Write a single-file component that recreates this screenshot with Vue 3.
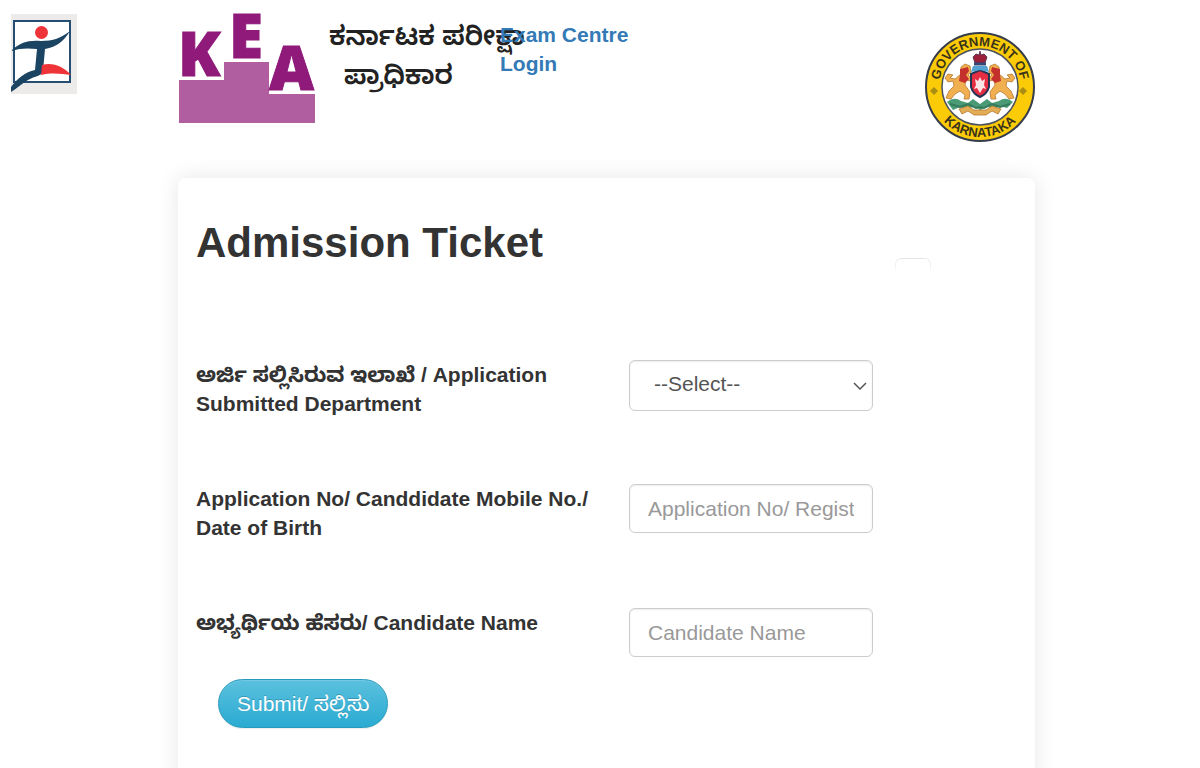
<template>
  <div class="page">
    <!-- Side logo -->
    <svg class="side-logo" viewBox="0 0 66 80" role="img" aria-label="Logo">
      <rect width="66" height="80" fill="#edebea" />
      <rect x="3" y="7" width="56" height="61" fill="#fff" stroke="#264e73" stroke-width="2" />
      <circle cx="30.500" cy="18.500" r="6.500" fill="#ee3439" />
      <path d="M0 37C9 28 18 26 30 27C42 27 50 24 59 17C53 27 46 33 34 35L32 57C31 62 24 62 17 66C10 70 5 75 0 78V73C7 64 14 58 24 56L26 35C17 34 9 34 0 37Z" fill="#1b4463" />
      <path d="M31 51C42 48 53 53 60 61C51 60 42 58 30 61Z" fill="#ee3439" />
    </svg>

    <div class="main">
      <header class="header">
        <div class="brand">
          <svg class="brand-logo" viewBox="0 0 137 112" role="img" aria-label="KEA">
            <path d="M1 67H46V49H91V81H137V110H1Z" fill="#b05e9f" />
            <g class="brand-letters" fill="#8f1a7a" stroke="#8f1a7a">
              <text x="0" y="63">K</text>
              <text x="51" y="45">E</text>
              <text x="91" y="77">A</text>
            </g>
          </svg>
          <div class="brand-name">
            <div>ಕರ್ನಾಟಕ ಪರೀಕ್ಷಾ</div>
            <div class="brand-second">ಪ್ರಾಧಿಕಾರ</div>
          </div>
        </div>
        <a class="centre-link" href="#">Exam Centre Login</a>
        <svg class="emblem" viewBox="0 0 110 112" role="img" aria-label="Government of Karnataka">
          <defs>
            <path id="arcTop" d="M14 56A41 41 0 0 1 96 56" />
            <path id="arcBottom" d="M5 56A50 50 0 0 0 105 56" />
          </defs>
          <circle cx="55" cy="56" r="54" fill="#fccb07" stroke="#353c4c" stroke-width="2" />
          <circle cx="55" cy="56" r="38" fill="#fff" stroke="#4b5060" stroke-width="1.500" />
          <g class="emblem-text">
            <text text-anchor="middle"><textPath href="#arcTop" startOffset="50%">GOVERNMENT OF</textPath></text>
            <text text-anchor="middle"><textPath href="#arcBottom" startOffset="50%">KARNATAKA</textPath></text>
          </g>
          <path d="M5 60l4-4 4 4-4 4zM94 60l4-4 4 4-4 4z" fill="#a98e13" />
          <!-- Lions -->
          <g id="lion">
            <path d="M36 36l4-3 5 2 1 6-3 3 4 3-1 3-5-1-1 5 5 7-1 7h-5l1-4-5-4-5 3-4 5-5-1 3-7 5-5-1-5-5 1-3-4 3-4 5 1-3 3 5 1 6-5z" fill="#f0b050" stroke="#b8772f" stroke-width=".8" />
            <path d="M35 38l8-2 1 4-3 4 3 4-4 4-6-2 1-6z" fill="#c4302b" />
          </g>
          <use href="#lion" transform="matrix(-1 0 0 1 110 0)" />
          <!-- Foliage and ribbon -->
          <path d="M22 71q7-6 14-1l7 2 5-4 7 5 7-5 5 4 7-2q7-5 14 1l-6 6-7-2-7 4-6-4-6 4-1 0-6-4-7 4-7-3-7 3z" fill="#4a9a75" />
          <path d="M25 73l10 3 8-3 8 4 4-1 4 1 8-4 8 3 10-3" fill="none" stroke="#347b5b" stroke-width="2" />
          <path d="M34 78l9-3 6 4h12l6-4 9 3-3 5-6-3-6 4H49l-6-4-6 3z" fill="#e3ad55" stroke="#b47a32" stroke-width=".8" />
          <!-- Shield and crown -->
          <path d="M46 43l9-4 9 4v13q-2 7-9 10-7-3-9-10z" fill="#e52e41" stroke="#263453" stroke-width="2" />
          <path d="M50 48l3 2 2-4 2 4 3-2-1 6 2 4-3-1-3 5-3-5-3 1 2-4z" fill="#fbe4e5" />
          <path d="M48 35h14l2 6-9-2-9 2z" fill="#54a1d3" />
          <path d="M50 32l-2-6 3-3 3 1 1-4 1 4 3-1 3 3-2 6z" fill="#9d203b" stroke="#492b48" stroke-width=".8" />
          <path d="M49 33h12" stroke="#344879" stroke-width="3" />
        </svg>
      </header>

      <main class="card">
        <div class="card-head">
          <h1>Admission Ticket</h1>
          <span class="ghost"></span>
        </div>
        <form @submit.prevent>
          <div class="row">
            <label for="department">ಅರ್ಜಿ ಸಲ್ಲಿಸಿರುವ ಇಲಾಖೆ / Application Submitted Department</label>
            <div class="select-wrapper">
              <select id="department" v-model="department">
                <option value="">--Select--</option>
              </select>
              <svg class="chevron" viewBox="0 0 14 8" aria-hidden="true">
                <path d="M1 1l6 6 6-6" fill="none" stroke="#555" stroke-width="1.500" />
              </svg>
            </div>
          </div>
          <div class="row">
            <label for="application">Application No/ Canddidate Mobile No./ Date of Birth</label>
            <input id="application" v-model="application" type="text" placeholder="Application No/ Register No" />
          </div>
          <div class="row">
            <label for="candidate">ಅಭ್ಯರ್ಥಿಯ ಹೆಸರು/ Candidate Name</label>
            <input id="candidate" v-model="candidate" type="text" placeholder="Candidate Name" />
          </div>
          <button type="submit" class="submit">Submit/ ಸಲ್ಲಿಸು</button>
        </form>
      </main>
    </div>
  </div>
</template>

<script setup>
import {ref} from 'vue';

// Form values
const department = ref('');
const application = ref('');
const candidate = ref('');
</script>

<style>
body {
  background: #fff;
}
</style>

<style scoped>
.page {
  display: flex;
  align-items: flex-start;
  color: #333;
  font-family: "Liberation Sans", "Noto Sans Kannada", sans-serif;
  font-size: 21px;
  line-height: 29px;
}

.side-logo {
  flex: none;
  width: 66px;
  margin: 14px 101px 0 11px;
}

.main {
  flex: 1;
  margin-right: 165px;
}

.header {
  display: grid;
  grid-template-columns: 322px 143px 1fr;
  align-items: start;
  min-height: 178px;
}

.brand {
  display: flex;
  padding-top: 13px;
}

.brand-logo {
  flex: none;
  width: 137px;
  overflow: visible;
}

.brand-letters {
  font-family: "Open Sans", sans-serif;
  font-size: 62px;
  font-weight: 800;
}

.brand-name {
  margin: 4px 0 0 14px;
  color: #222;
  font-size: 27px;
  font-weight: 600;
  line-height: 39px;
  white-space: nowrap;
}

.brand-second {
  padding-left: 15px;
}

.centre-link {
  position: relative;
  margin-top: 20px;
  color: #337ab7;
  font-weight: 700;
  text-decoration: none;
}

.emblem {
  width: 110px;
  margin-top: 31px;
  justify-self: end;
}

.emblem-text {
  fill: #39331c;
  font-size: 13px;
  font-weight: 700;
}

.card {
  padding: 36px 18px 96px;
  border-radius: 7px;
  background: #fff;
  box-shadow: 0 0 22px rgba(0, 0, 0, 0.1);
}

.card-head {
  display: flex;
  justify-content: space-between;
  margin-bottom: 87px;
  padding-right: 86px;
}

h1 {
  margin: 0;
  font-size: 42px;
  line-height: 58px;
  font-weight: 700;
}

/* Faded top edge of an empty control */
.ghost {
  width: 34px;
  height: 14px;
  margin-top: 44px;
  border: 1px solid #e4e4e4;
  border-bottom: 0;
  border-radius: 6px 6px 0 0;
  mask-image: linear-gradient(#000, transparent);
}

.row {
  display: grid;
  grid-template-columns: 1fr 244px;
  gap: 19px;
  align-items: start;
  min-height: 124px;
  padding-right: 144px;
}

.row:last-of-type {
  min-height: 71px;
}

label {
  font-weight: 700;
}

input,
select {
  box-sizing: border-box;
  width: 100%;
  height: 49px;
  padding: 0 18px;
  border: 1px solid #ccc;
  border-radius: 6px;
  background: #fff;
  box-shadow: inset 0 1px 2px rgba(0, 0, 0, 0.08);
  color: #555;
  font: inherit;
}

input::placeholder {
  color: #999;
}

.select-wrapper {
  position: relative;
}

select {
  display: block;
  height: 51px;
  padding: 0 24px 4px;
  appearance: none;
}

.chevron {
  position: absolute;
  top: 22px;
  right: 6px;
  width: 14px;
  pointer-events: none;
}

.submit {
  height: 49px;
  margin-left: 22px;
  padding: 0 18px;
  border: 1px solid #269abc;
  border-radius: 25px;
  background: linear-gradient(#5bc0de, #2aabd2);
  box-shadow: inset 0 1px 0 rgba(255, 255, 255, 0.15), 0 1px 1px rgba(0, 0, 0, 0.08);
  color: #fff;
  font: inherit;
  text-shadow: 0 -1px 0 rgba(0, 0, 0, 0.2);
}
</style>
